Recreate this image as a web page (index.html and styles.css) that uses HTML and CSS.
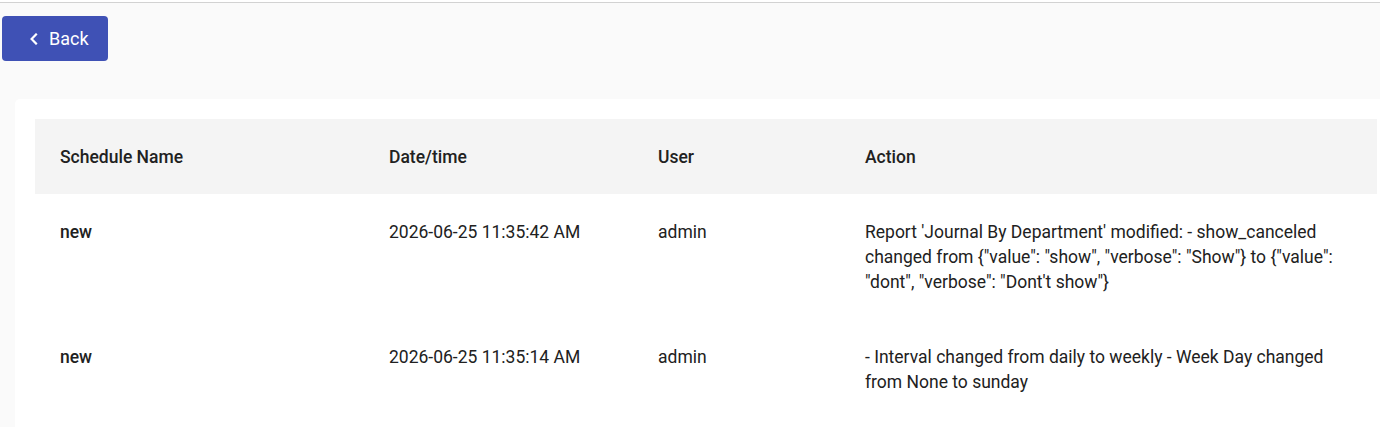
FILE: index.html
```html
<!DOCTYPE html>
<html lang="en">
<head>
<meta charset="utf-8">
<title>Schedule History</title>
<link rel="stylesheet" href="styles.css">
</head>
<body>
<div class="topline"></div>
<main class="page">
  <div class="toolbar">
    <button class="back-btn" type="button">
      <svg class="chev" width="10" height="12" viewBox="0 0 10 12" aria-hidden="true"><path d="M7 1.5 L2.6 6 L7 10.5" fill="none" stroke="#ffffff" stroke-width="2.2" stroke-linecap="square"/></svg>
      <span>Back</span>
    </button>
  </div>
  <section class="card">
    <table class="history">
      <thead>
        <tr>
          <th class="c1">Schedule Name</th>
          <th class="c2">Date/time</th>
          <th class="c3">User</th>
          <th class="c4">Action</th>
        </tr>
      </thead>
      <tbody>
        <tr>
          <td class="name">new</td>
          <td>2026-06-25 11:35:42 AM</td>
          <td>admin</td>
          <td>Report 'Journal By Department' modified: - show_canceled changed from {"value": "show", "verbose": "Show"} to {"value": "dont", "verbose": "Dont't show"}</td>
        </tr>
        <tr>
          <td class="name">new</td>
          <td>2026-06-25 11:35:14 AM</td>
          <td>admin</td>
          <td>- Interval changed from daily to weekly - Week Day changed from None to sunday</td>
        </tr>
      </tbody>
    </table>
  </section>
</main>
</body>
</html>
```
FILE: styles.css
```css
html, body {
  margin: 0;
  padding: 0;
}
body {
  background: #fafafa;
  font-family: Roboto, "Liberation Sans", Arial, sans-serif;
  color: #212121;
  width: 1380px;
  height: 427px;
  overflow: hidden;
}
.topline {
  height: 2px;
  background: #ffffff;
  border-bottom: 1px solid #d2d2d2;
}
.toolbar {
  padding: 13px 0 0 2px;
}
.back-btn {
  display: flex;
  align-items: center;
  gap: 10px;
  width: 106px;
  height: 45px;
  padding: 0 0 0 27px;
  border: none;
  border-radius: 4px;
  background: #3f51b5;
  color: #ffffff;
  font-family: Roboto, "Liberation Sans", Arial, sans-serif;
  font-size: 18px;
  font-weight: 400;
  cursor: pointer;
}
.back-btn .chev {
  display: block;
}
.card {
  margin: 38px 0 0 15px;
  width: 1345px;
  height: 308px;
  padding: 20px 0 0 20px;
  background: #ffffff;
  border-radius: 5px 0 0 0;
}
.history {
  width: 1342px;
  border-collapse: collapse;
  table-layout: fixed;
  font-size: 17.5px;
  line-height: 25px;
}
.history th,
.history td {
  text-align: left;
  vertical-align: top;
  padding: 26px 25px 24px 25px;
}
.history thead th {
  background: #f4f4f4;
  font-weight: 500;
  padding: 26px 25px 24px 25px;
}
.c1 { width: 279px; }
.c2 { width: 219px; }
.c3 { width: 157px; }
.c4 { width: auto; }
.history td.name {
  font-weight: 500;
}
```
